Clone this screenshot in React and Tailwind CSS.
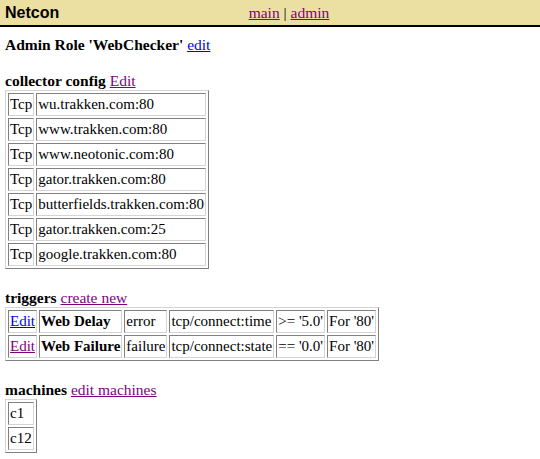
import React from "react";

const serif = { fontFamily: '"Liberation Serif", "Times New Roman", serif' };

const collectors = [
  "wu.trakken.com:80",
  "www.trakken.com:80",
  "www.neotonic.com:80",
  "gator.trakken.com:80",
  "butterfields.trakken.com:80",
  "gator.trakken.com:25",
  "google.trakken.com:80",
];

const triggers = [
  { visited: false, name: "Web Delay", level: "error", metric: "tcp/connect:time", cond: ">= '5.0'", port: "For '80'" },
  { visited: true, name: "Web Failure", level: "failure", metric: "tcp/connect:state", cond: "== '0.0'", port: "For '80'" },
];

// old-school border=1 table look: outset frame, inset cells
const tableCls =
  "border-separate border-spacing-[2px] border border-t-[#d4d4d4] border-l-[#d4d4d4] border-b-[#808080] border-r-[#808080]";
const cellCls =
  "border border-t-[#808080] border-l-[#808080] border-b-[#d4d4d4] border-r-[#d4d4d4] px-[1px] py-[1px] leading-[19px] whitespace-nowrap";

const Cell = ({ children, className = "" }) => (
  <td className={`${cellCls} ${className}`} style={serif}>
    {children}
  </td>
);

const App = () => {
  return (
    <div className="min-h-[459px] bg-white text-[15px] text-black" style={serif}>
      <div className="flex items-center h-[27px] bg-[#ecdfa2] border-b-[2px] border-black">
        <div
          className="pl-[5px] w-[70px] text-[16px] font-bold"
          style={{ fontFamily: '"Liberation Sans", Arial, sans-serif' }}
        >
          Netcon
        </div>
        <div className="flex-1 pr-[32px] text-center text-[15.5px]">
          <a href="#" className="underline text-[#800080]">main</a> |{" "}
          <a href="#" className="underline text-[#800080]">admin</a>
        </div>
      </div>

      <div className="px-[5px]">
        <div className="mt-[8px] leading-[19px] text-[15.5px]">
          <b>Admin Role 'WebChecker'</b>{" "}
          <a href="#" className="underline text-[#0000ee]">edit</a>
        </div>

        <div className="mt-[17px] leading-[19px] text-[15.5px]">
          <b>collector config</b>{" "}
          <a href="#" className="underline text-[#800080]">Edit</a>
        </div>
        <table className={tableCls}>
          <tbody>
            {collectors.map((c) => (
              <tr key={c}>
                <Cell>Tcp</Cell>
                <Cell>{c}</Cell>
              </tr>
            ))}
          </tbody>
        </table>

        <div className="mt-[19px] leading-[19px] text-[15.5px]">
          <b>triggers</b>{" "}
          <a href="#" className="underline text-[#800080]">create new</a>
        </div>
        <table className={tableCls}>
          <tbody>
            {triggers.map((t) => (
              <tr key={t.name}>
                <Cell>
                  <a href="#" className={`underline ${t.visited ? "text-[#800080]" : "text-[#0000ee]"}`}>Edit</a>
                </Cell>
                <Cell className="font-bold">{t.name}</Cell>
                <Cell>{t.level}</Cell>
                <Cell>{t.metric}</Cell>
                <Cell>{t.cond}</Cell>
                <Cell>{t.port}</Cell>
              </tr>
            ))}
          </tbody>
        </table>

        <div className="mt-[19px] leading-[19px] text-[15.5px]">
          <b>machines</b>{" "}
          <a href="#" className="underline text-[#800080]">edit machines</a>
        </div>
        <table className={tableCls}>
          <tbody>
            {["c1", "c12"].map((m) => (
              <tr key={m}>
                <Cell>{m}</Cell>
              </tr>
            ))}
          </tbody>
        </table>
      </div>
    </div>
  );
};

export default App;
